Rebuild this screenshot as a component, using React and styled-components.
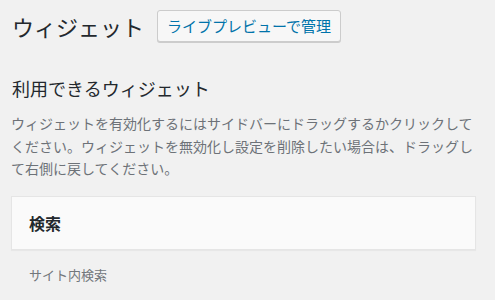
import React from "react";
import styled, { createGlobalStyle } from "styled-components";

const Global = createGlobalStyle`
  html, body { margin: 0; padding: 0; background: #f1f1f1; }
  body { font-family: "Noto Sans CJK JP", "Noto Sans", sans-serif; color: #23282d; }
`;

const Page = styled.div`
  padding: 0 11px;
  width: 495px;
  box-sizing: border-box;
`;

const Header = styled.div`
  display: flex;
  align-items: center;
  padding-top: 10px;
  height: 32px;
`;

const Title = styled.h1`
  margin: 0 13px 0 1px;
  font-size: 22px;
  line-height: 32px;
  font-weight: 400;
  color: #23282d;
`;

const ActionButton = styled.button`
  height: 32px;
  box-sizing: border-box;
  padding: 0 9px;
  border: 1px solid #ccc;
  border-radius: 3px;
  background: #f7f7f7;
  box-shadow: 0 1px 0 #ccc;
  color: #0073aa;
  font-family: inherit;
  font-size: 15px;
  line-height: 30px;
  cursor: pointer;
`;

const SectionTitle = styled.h2`
  margin: 33px 0 0 1px;
  font-size: 18px;
  line-height: 26px;
  font-weight: 400;
  color: #23282d;
`;

const Description = styled.p`
  margin: 11px 0 0;
  width: 466px;
  font-size: 14px;
  line-height: 22.5px;
  color: #6d7278;
`;

const Keep = styled.span`
  white-space: nowrap;
`;

const WidgetCard = styled.div`
  margin-top: 16px;
  width: 465px;
  height: 54px;
  box-sizing: border-box;
  display: flex;
  align-items: center;
  padding: 0 17px;
  background: #fafafa;
  border: 1px solid #e5e5e5;
  box-shadow: 0 1px 1px rgba(0, 0, 0, 0.04);
`;

const WidgetName = styled.h3`
  margin: 0;
  font-size: 16px;
  font-weight: 600;
  color: #23282d;
`;

const WidgetDesc = styled.div`
  margin: 15px 0 0 18px;
  font-size: 13px;
  line-height: 20px;
  color: #72777c;
`;

export default function App() {
  return (
    <>
      <Global />
      <Page>
        <Header>
          <Title>ウィジェット</Title>
          <ActionButton>ライブプレビューで管理</ActionButton>
        </Header>
        <SectionTitle>利用できるウィジェット</SectionTitle>
        <Description>
          ウィジェットを有効化するにはサイドバーにドラッグするかクリックしてください。ウィジェットを無効化し設定を削除したい場合は、ドラッグし<Keep>て右側に</Keep>戻してください。
        </Description>
        <WidgetCard>
          <WidgetName>検索</WidgetName>
        </WidgetCard>
        <WidgetDesc>サイト内検索</WidgetDesc>
      </Page>
    </>
  );
}
